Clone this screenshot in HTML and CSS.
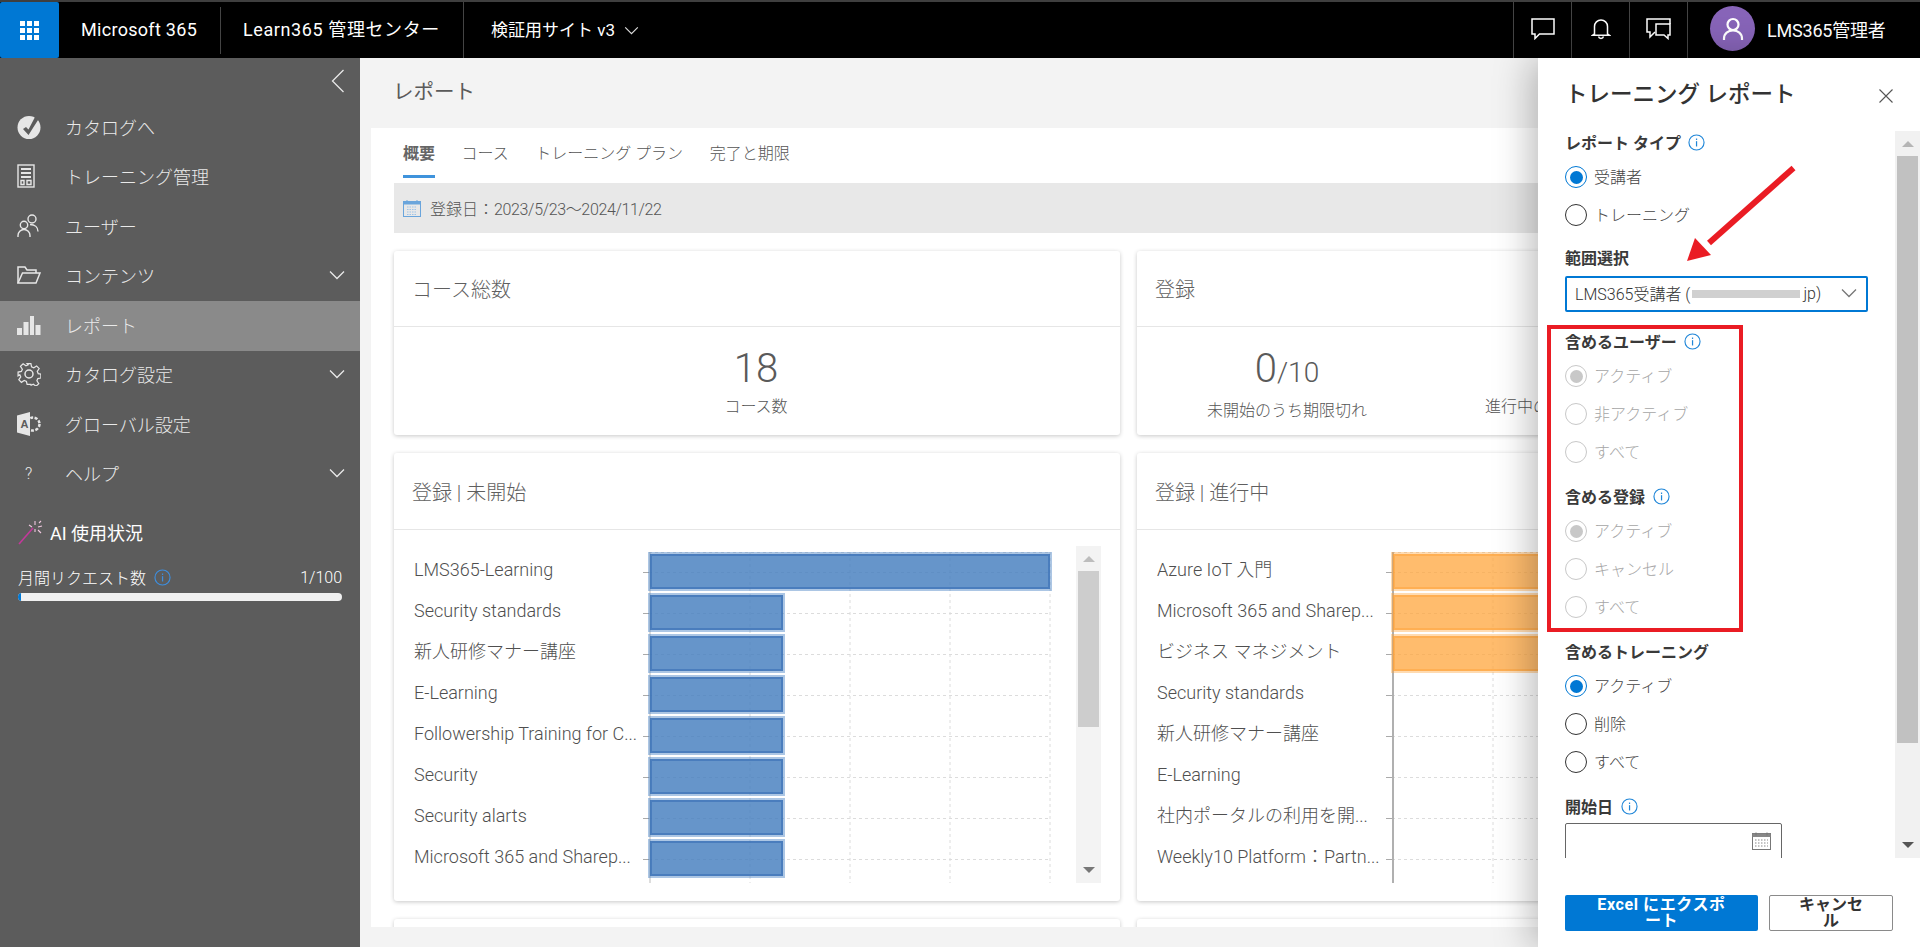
FILE: index.html
```html
<!DOCTYPE html>
<html lang="ja">
<head>
<meta charset="utf-8">
<title>レポート</title>
<link rel="stylesheet" href="styles.css">
</head>
<body>
<svg class="defs" width="0" height="0">
  <symbol id="info" viewBox="0 0 18 18"><circle cx="9" cy="9" r="8" fill="none" stroke="currentColor" stroke-width="1.2"/><rect x="8.4" y="7.6" width="1.3" height="5.6" fill="currentColor"/><rect x="8.4" y="4.8" width="1.3" height="1.5" fill="currentColor"/></symbol>
  <symbol id="chev" viewBox="0 0 16 10"><path d="M1 1.5l7 7 7-7" fill="none" stroke="currentColor" stroke-width="1.3"/></symbol>
</svg>

<header class="topbar">
  <div class="waffle">
    <svg width="19" height="19" viewBox="0 0 19 19" fill="#fff"><rect width="5" height="5"/><rect x="7" width="5" height="5"/><rect x="14" width="5" height="5"/><rect y="7" width="5" height="5"/><rect x="7" y="7" width="5" height="5"/><rect x="14" y="7" width="5" height="5"/><rect y="14" width="5" height="5"/><rect x="7" y="14" width="5" height="5"/><rect x="14" y="14" width="5" height="5"/></svg>
  </div>
  <div class="brand">Microsoft 365</div>
  <div class="app-name">Learn365 管理センター</div>
  <div class="site">検証用サイト v3<svg class="site-chev" width="15" height="9"><use href="#chev"/></svg></div>
  <div class="top-right">
    <div class="top-icon"><svg width="24" height="22" viewBox="0 0 24 22" fill="none" stroke="#fff" stroke-width="1.5"><path d="M1 1h22v15H8.500L4 20.500V16H1z"/></svg></div>
    <div class="top-icon"><svg width="20" height="22" viewBox="0 0 20 22" fill="none" stroke="#fff" stroke-width="1.5"><path d="M3.500 16V8.500a6.500 6.500 0 0 1 13 0V16l2 1.300H1.500z"/><path d="M7.500 18.500a2.600 2.600 0 0 0 5 0"/></svg></div>
    <div class="top-icon"><svg width="25" height="22" viewBox="0 0 25 22" fill="none" stroke="#fff" stroke-width="1.500"><path d="M24 6V1H1v13h3v5l5-5"/><path d="M10 6h14v11h-2v3.500L18 17h-8z"/></svg></div>
    <div class="user">
      <div class="avatar"><svg width="22" height="24" viewBox="0 0 22 24" fill="none" stroke="#fff" stroke-width="2.200"><circle cx="11" cy="7.500" r="5.500"/><path d="M2 23v-1.500C2 16.500 6 13.500 11 13.500s9 3 9 8V23"/></svg></div>
      <span class="user-name">LMS365管理者</span>
    </div>
  </div>
</header>

<div class="shell">
  <nav class="sidebar">
    <div class="collapse"><svg width="14" height="24" viewBox="0 0 14 24" fill="none" stroke="#e8e8e8" stroke-width="1.300"><path d="M12.500 1L1.500 12l11 11"/></svg></div>
    <ul class="menu">
      <li class="menu-item"><span class="menu-icon"><svg width="24" height="24" viewBox="0 0 24 24"><circle cx="12" cy="12.500" r="11.500" fill="#e6e6e6"/><path d="M6 14l3-2 2.500 2.500L18 2l4 1.500L11.500 20z" fill="#5c5c5c"/></svg></span>カタログへ</li>
      <li class="menu-item"><span class="menu-icon"><svg width="18" height="24" viewBox="0 0 18 24" fill="none" stroke="#e6e6e6" stroke-width="1.400"><rect x="1" y="1" width="16" height="22"/><path d="M4 5h10M4 9h10M4 13h10" stroke-width="2"/><path d="M4 16.500h3v4H4zM10 16.500h4v4h-4z"/></svg></span>トレーニング管理</li>
      <li class="menu-item"><span class="menu-icon"><svg width="22" height="24" viewBox="0 0 22 24" fill="none" stroke="#e6e6e6" stroke-width="1.400"><circle cx="15" cy="5" r="4"/><circle cx="7" cy="11" r="3.700"/><path d="M1 23v-1.500a6 6 0 0 1 12 0V23M13 10.500c5 0 8 3 8 7"/></svg></span>ユーザー</li>
      <li class="menu-item"><span class="menu-icon"><svg width="24" height="18" viewBox="0 0 24 18" fill="none" stroke="#e6e6e6" stroke-width="1.500"><path d="M1 17V1h7l2 3h9v3"/><path d="M1 17L5.500 7H23l-4 10z"/></svg></span>コンテンツ<svg class="menu-chev" width="16" height="10"><use href="#chev"/></svg></li>
      <li class="menu-item is-active"><span class="menu-icon"><svg width="24" height="20" viewBox="0 0 24 20" fill="#e6e6e6"><rect y="13" width="5" height="7"/><rect x="6.500" y="7" width="5" height="13"/><rect x="13" y="1" width="4" height="19"/><rect x="18.500" y="10" width="5" height="10"/></svg></span>レポート</li>
      <li class="menu-item"><span class="menu-icon"><svg width="24" height="24" viewBox="0 0 24 24" fill="none" stroke="#e6e6e6" stroke-width="1.500"><circle cx="12" cy="12" r="4"/><path d="M10 1h4l.7 3.500 2.300 1 3-2 2.700 2.800-2 3 1 2.300 2.800.6v4l-3.200.6-1 2.300 2 3-2.800 2.700-3-2-2.300 1L14 23h-4l-.7-3.200-2.300-1-3 2-2.700-2.800 2-3-1-2.300L.5 14v-4L4 9.300l1-2.300-2-3 2.800-2.700 3 2 2.300-1z" stroke-width="1.300" transform="translate(.6 .6) scale(.95)"/></svg></span>カタログ設定<svg class="menu-chev" width="16" height="10"><use href="#chev"/></svg></li>
      <li class="menu-item"><span class="menu-icon"><svg width="24" height="24" viewBox="0 0 24 24"><circle cx="16" cy="12" r="6.500" fill="none" stroke="#e6e6e6" stroke-width="2.500" stroke-dasharray="3 1.500"/><path d="M0 3.500L13 0v24L0 20.500z" fill="#e6e6e6"/><text class="global-a" x="3.500" y="16">A</text></svg></span>グローバル設定</li>
      <li class="menu-item"><span class="menu-icon menu-q">?</span>ヘルプ<svg class="menu-chev" width="16" height="10"><use href="#chev"/></svg></li>
    </ul>
    <div class="ai-title"><svg width="25" height="25" viewBox="0 0 25 25" fill="none"><path d="M1 24L15 8" stroke="#c2399a" stroke-width="1.600"/><path d="M17 1v4M17 9v3M11 5l3 2M20 7l4-1M20 10l3 3M21 3l2-2" stroke="#f0c8e0" stroke-width="1.100"/></svg><span>AI 使用状況</span></div>
    <div class="quota">
      <div class="quota-row"><span>月間リクエスト数</span><svg class="quota-info" width="17" height="17"><use href="#info"/></svg><span class="quota-num">1/100</span></div>
      <div class="progress"><div class="progress-fill"></div></div>
    </div>
  </nav>

  <main class="main">
    <h1 class="page-title">レポート</h1>
    <section class="panel">
      <div class="tabs">
        <span class="tab is-current">概要</span>
        <span class="tab">コース</span>
        <span class="tab">トレーニング プラン</span>
        <span class="tab">完了と期限</span>
      </div>
      <div class="filter">
        <svg width="18" height="18" viewBox="0 0 18 18" fill="none"><rect x=".5" y="2.500" width="17" height="15" stroke="#6aa5dc"/><rect x=".5" y="2.500" width="17" height="3" fill="#6aa5dc"/><path d="M4 1v3M14 1v3" stroke="#6aa5dc"/><path d="M4 8h10M4 10.500h10M4 13h10M4 15.500h10" stroke="#9dc3e8" stroke-dasharray="1.500 1"/></svg>
        <span>登録日：<span class="filter-date">2023/5/23～2024/11/22</span></span>
      </div>
      <div class="cards">
        <article class="card">
          <h2 class="card-head">コース総数</h2>
          <div class="stats"><div class="stat stat-wide"><div class="stat-num">18</div><div class="stat-label">コース数</div></div></div>
        </article>
        <article class="card">
          <h2 class="card-head">登録</h2>
          <div class="stats stats-split">
            <div class="stat"><div class="stat-num">0<small>/10</small></div><div class="stat-label">未開始のうち期限切れ</div></div>
            <div class="stat stat-clipped"><div class="stat-num stat-empty"></div><div class="stat-label">進行中の</div></div>
          </div>
        </article>

        <article class="card">
          <h2 class="card-head card-head-tall">登録 | 未開始</h2>
          <div class="chart">
            <ul class="labels">
              <li>LMS365-Learning</li><li>Security standards</li><li>新人研修マナー講座</li><li>E-Learning</li><li>Followership Training for C...</li><li>Security</li><li>Security alarts</li><li>Microsoft 365 and Sharep...</li>
            </ul>
            <div class="plot">
              <svg class="grid" width="403" height="331" viewBox="0 0 403 331"><path class="grid-line" d="M0 .5H401M0 20.500H401M0 61.500H401M0 102.500H401M0 143.500H401M0 184.500H401M0 225.500H401M0 266.500H401M0 307.500H401M101 0V331M201 0V331M301 0V331M401 0V331"/><path class="axis" d="M1 0V331"/></svg>
              <div class="bar bar-blue" style="width:404px"></div>
              <div class="bar bar-blue" style="width:137px"></div>
              <div class="bar bar-blue" style="width:137px"></div>
              <div class="bar bar-blue" style="width:137px"></div>
              <div class="bar bar-blue" style="width:137px"></div>
              <div class="bar bar-blue" style="width:137px"></div>
              <div class="bar bar-blue" style="width:137px"></div>
              <div class="bar bar-blue" style="width:137px"></div>
            </div>
            <div class="vscroll">
              <span class="arrow-up"></span>
              <div class="vscroll-thumb"></div>
              <span class="arrow-down"></span>
            </div>
          </div>
        </article>
        <article class="card">
          <h2 class="card-head card-head-tall">登録 | 進行中</h2>
          <div class="chart">
            <ul class="labels">
              <li>Azure IoT 入門</li><li>Microsoft 365 and Sharep...</li><li>ビジネス マネジメント</li><li>Security standards</li><li>新人研修マナー講座</li><li>E-Learning</li><li>社内ポータルの利用を開...</li><li>Weekly10 Platform：Partn...</li>
            </ul>
            <div class="plot">
              <svg class="grid" width="403" height="331" viewBox="0 0 403 331"><path class="grid-line" d="M0 .5H401M0 20.500H401M0 61.500H401M0 102.500H401M0 143.500H401M0 184.500H401M0 225.500H401M0 266.500H401M0 307.500H401M101 0V331M201 0V331M301 0V331M401 0V331"/><path class="axis axis-strong" d="M1 0V331"/></svg>
              <div class="bar bar-orange" style="width:300px"></div>
              <div class="bar bar-orange" style="width:300px"></div>
              <div class="bar bar-orange" style="width:300px"></div>
            </div>
          </div>
        </article>

        <article class="card"></article>
        <article class="card"></article>
      </div>
    </section>
  </main>
</div>

<aside class="drawer">
  <div class="drawer-head">
    <h2 class="drawer-title">トレーニング レポート</h2>
    <svg class="drawer-close" width="14" height="14" viewBox="0 0 14 14" stroke="#555" stroke-width="1.100"><path d="M.5.500l13 13M13.500.500l-13 13"/></svg>
  </div>
  <div class="drawer-body">
    <form class="form">
      <div class="field-label">レポート タイプ<svg class="info" width="17" height="17"><use href="#info"/></svg></div>
      <div class="radio is-on"><span class="radio-dot"></span><span class="radio-text">受講者</span></div>
      <div class="radio"><span class="radio-dot"></span><span class="radio-text">トレーニング</span></div>

      <div class="field-label gap-sel">範囲選択</div>
      <div class="select">LMS365受講者 (<span class="redact"></span>jp)<svg class="select-chev" width="16" height="10"><use href="#chev"/></svg></div>

      <div class="field-label gap-m">含めるユーザー<svg class="info" width="17" height="17"><use href="#info"/></svg></div>
      <div class="radio is-off is-on"><span class="radio-dot"></span><span class="radio-text">アクティブ</span></div>
      <div class="radio is-off"><span class="radio-dot"></span><span class="radio-text">非アクティブ</span></div>
      <div class="radio is-off"><span class="radio-dot"></span><span class="radio-text">すべて</span></div>

      <div class="field-label gap-s">含める登録<svg class="info" width="17" height="17"><use href="#info"/></svg></div>
      <div class="radio is-off is-on"><span class="radio-dot"></span><span class="radio-text">アクティブ</span></div>
      <div class="radio is-off"><span class="radio-dot"></span><span class="radio-text">キャンセル</span></div>
      <div class="radio is-off"><span class="radio-dot"></span><span class="radio-text">すべて</span></div>

      <div class="field-label gap-s">含めるトレーニング</div>
      <div class="radio is-on"><span class="radio-dot"></span><span class="radio-text">アクティブ</span></div>
      <div class="radio"><span class="radio-dot"></span><span class="radio-text">削除</span></div>
      <div class="radio"><span class="radio-dot"></span><span class="radio-text">すべて</span></div>

      <div class="field-label gap-s gap-date">開始日<svg class="info" width="17" height="17"><use href="#info"/></svg></div>
      <div class="date">
        <svg width="19" height="18" viewBox="0 0 19 18" fill="none"><rect x=".5" y="1.500" width="18" height="16" stroke="#777"/><rect x=".5" y="1.500" width="18" height="3.500" fill="#888"/><path d="M4 .5v3M15 .5v3" stroke="#777"/><path d="M3 8h13M3 11h13M3 14h13" stroke="#888" stroke-dasharray="1.500 1.500"/></svg>
      </div>
    </form>
    <div class="drawer-scroll">
      <span class="arrow-up arrow-dark"></span>
      <div class="drawer-thumb"></div>
      <span class="arrow-down arrow-dark"></span>
    </div>
  </div>
  <div class="drawer-foot">
    <button class="btn btn-primary" type="button">Excel にエクスポート</button>
    <button class="btn btn-plain" type="button">キャンセル</button>
  </div>
</aside>

<div class="mark-box"></div>
<svg class="mark-arrow" width="112" height="100" viewBox="0 0 112 100"><path d="M108.500 3L24 78" stroke="#ea1c24" stroke-width="6" fill="none"/><path d="M2 96L10 73 26 90z" fill="#ea1c24"/></svg>
</body>
</html>
```
FILE: styles.css
```css
* { box-sizing: border-box; }
html, body { margin: 0; padding: 0; }
body {
  position: relative;
  width: 1920px;
  height: 947px;
  overflow: hidden;
  font-family: Roboto, "Noto Sans CJK JP", sans-serif;
  font-weight: 300;
  color: #555;
  background: #f3f3f3;
}
ul { list-style: none; margin: 0; padding: 0; }
h1, h2 { margin: 0; font-weight: 300; }
.defs { position: absolute; }

/* top bar */
.topbar {
  display: flex;
  height: 58px;
  background: #000;
  border-top: 2px solid #3f3f3f;
  color: #fff;
  font-size: 18px;
  font-weight: 400;
}
.waffle {
  width: 59px;
  background: #0078d4;
  border-radius: 2px;
  display: flex;
  align-items: center;
  justify-content: center;
}
.brand { width: 162px; padding-left: 22px; line-height: 55px; position: relative; letter-spacing: .3px; }
.brand::after {
  content: "";
  position: absolute;
  right: 0;
  top: 5px;
  bottom: 4px;
  width: 1px;
  background: #444;
}
.app-name {
  width: 243px;
  padding-left: 22px;
  line-height: 55px;
  border-right: 1px solid #444;
  font-size: 18px;
  letter-spacing: .6px;
}
.site { padding-left: 27px; line-height: 55px; display: flex; align-items: center; white-space: pre; font-size: 17px; }
.site-chev { margin-left: 9px; color: #ddd; }
.top-right { margin-left: auto; display: flex; }
.top-icon {
  width: 58px;
  border-left: 1px solid #444;
  display: flex;
  align-items: center;
  justify-content: center;
  padding-bottom: 2px;
}
.user {
  width: 233px;
  border-left: 1px solid #444;
  padding-left: 22px;
  display: flex;
  align-items: center;
  padding-bottom: 3px;
}
.avatar {
  width: 45px;
  height: 45px;
  border-radius: 50%;
  background: #8764b8;
  display: flex;
  align-items: center;
  justify-content: center;
}
.user-name { margin-left: 12px; font-size: 18px; letter-spacing: -.2px; }

.shell { display: flex; height: 889px; }

/* sidebar */
.sidebar {
  width: 360px;
  background: #5c5c5c;
  color: #e9e9e9;
  font-size: 18px;
  flex: none;
}
.collapse { height: 45px; padding: 11px 0 0 331px; line-height: 0; }
.menu-item {
  display: flex;
  align-items: center;
  height: 49.5px;
  padding-left: 17px;
  padding-bottom: 2px;
  font-weight: 300;
}
.menu-item.is-active { background: #8a8a8a; }
.menu-icon { width: 48px; flex: none; display: flex; align-items: center; }
.menu-q { padding-left: 8px; font-size: 16px; }
.global-a { font: 700 11px "Liberation Sans", sans-serif; fill: #5c5c5c; }
.menu-chev { margin-left: auto; margin-right: 15px; color: #e9e9e9; }
.ai-title {
  display: flex;
  align-items: center;
  margin-top: 19px;
  padding-left: 18px;
  height: 28px;
  color: #fff;
  font-weight: 400;
}
.ai-title span { margin-left: 7px; }
.quota { padding: 19px 18px 0; font-size: 16px; color: #fff; }
.quota-row { display: flex; align-items: center; height: 24px; }
.quota-info { margin-left: 8px; color: #3d8fe0; }
.quota-num { margin-left: auto; }
.progress { margin-top: 4px; height: 8px; background: #f0f0f0; border-radius: 4px; overflow: hidden; }
.progress-fill { width: 3px; height: 8px; background: #0078d4; }

/* main */
.main { flex: 1; min-width: 0; }
.page-title {
  height: 70px;
  padding-left: 33px;
  font-size: 20.500px;
  font-weight: 400;
  line-height: 69px;
  color: #5a5a5a;
}
.panel { height: 799px; margin-left: 11px; padding-left: 23px; background: #fff; overflow: hidden; }
.tabs { display: flex; height: 55px; padding-left: 9px; gap: 26.500px; font-size: 16px; }
.tab { height: 50px; line-height: 52px; }
.tab.is-current { border-bottom: 3px solid #3f93dc; font-weight: 700; color: #666; }
.filter {
  display: flex;
  align-items: center;
  gap: 9px;
  height: 50px;
  width: 1200px;
  padding-left: 9px;
  background: #e8e8e8;
  font-size: 16px;
}
.filter-date { letter-spacing: -.35px; }
.cards {
  display: grid;
  grid-template-columns: 726px 726px;
  grid-template-rows: 184px 448px 100px;
  gap: 18px 17px;
  margin-top: 18px;
}
.card { background: #fff; border-radius: 3px; box-shadow: 0 1px 4px rgba(0,0,0,.22); }
.card-head {
  height: 76px;
  padding-left: 18px;
  border-bottom: 1px solid #e6e6e6;
  font-size: 20px;
  line-height: 78px;
  color: #5f5f5f;
}
.card-head-tall { height: 77px; line-height: 80px; }
.stats { display: flex; justify-content: center; padding-top: 18px; }
.stats-split { justify-content: flex-start; padding-left: 11px; }
.stats-split .stat { width: 278px; }
.stats-split .stat-clipped { text-align: left; padding-left: 59px; }
.stat { text-align: center; }
.stat-wide { width: 100%; padding-right: 2px; }
.stat-num { font-size: 40px; line-height: 48px; color: #5a5a5a; font-weight: 300; }
.stat-num small { font-size: 28px; }
.stat-empty { height: 48px; }
.stat-label { margin-top: 3px; font-size: 16px; line-height: 22px; }

/* chart */
.chart { display: flex; height: 337px; margin-top: 16px; padding-left: 20px; }
.labels { width: 235px; flex: none; padding-top: 6px; font-size: 18px; }
.labels li {
  position: relative;
  height: 41px;
  line-height: 36px;
  white-space: nowrap;
  color: #4f4f4f;
}
.labels li::after {
  content: "";
  position: absolute;
  left: 229px;
  top: 20px;
  width: 6px;
  height: 1px;
  background: #aaa;
}
.plot { position: relative; width: 403px; flex: none; padding-top: 6px; }
.grid { position: absolute; left: 0; top: 6px; }
.grid-line { stroke: #dcdcdc; fill: none; stroke-dasharray: 3 3; }
.axis { stroke: #bbb; fill: none; }
.axis-strong { stroke: #b0b0b0; stroke-width: 2; }
.bar { position: relative; height: 39px; margin-bottom: 2px; margin-left: -1px; border: 2px solid; background-clip: padding-box; }
.bar-blue {
  background-color: rgba(68,126,190,.82);
  border-color: rgba(70,128,195,.45);
  box-shadow: inset 0 0 0 2px rgba(55,110,180,.6);
}
.bar-orange {
  background-color: rgba(255,165,60,.75);
  border-color: rgba(255,165,60,.4);
  box-shadow: inset 0 0 0 2px rgba(255,160,50,.45);
}
.vscroll {
  width: 25px;
  height: 337px;
  margin-left: 24px;
  background: #f3f3f3;
  position: relative;
  padding: 25px 2px 0;
}
.vscroll-thumb { height: 156px; background: #cdcdcd; }
.arrow-up, .arrow-down {
  position: absolute;
  left: 50%;
  margin-left: -6px;
  width: 0;
  height: 0;
  border-left: 6px solid transparent;
  border-right: 6px solid transparent;
}
.arrow-up { top: 10px; border-bottom: 6px solid #bdbdbd; }
.arrow-down { bottom: 10px; border-top: 6px solid #777; }

/* drawer */
.drawer {
  position: absolute;
  top: 58px;
  right: 0;
  bottom: 0;
  width: 382px;
  background: #fff;
  box-shadow: -6px 0 36px rgba(0,0,0,.28);
  color: #333;
  display: flex;
  flex-direction: column;
  font-weight: 400;
}
.drawer-head { height: 73px; padding: 0 27px 5px 27px; display: flex; align-items: center; justify-content: space-between; flex: none; }
.drawer-title { font-size: 22.500px; font-weight: 500; color: #333; white-space: nowrap; }
.drawer-close { margin-top: 8px; }
.drawer-body { position: relative; height: 727px; flex: none; overflow: hidden; }
.form { padding-left: 27px; }
.field-label {
  display: flex;
  align-items: center;
  height: 24px;
  margin-bottom: 3px;
  padding-bottom: 2px;
  font-size: 16px;
  font-weight: 700;
  color: #3a3a3a;
  white-space: pre;
}
.gap-s { margin-top: 14px; }
.gap-date { margin-bottom: 4px; }
.gap-sel { margin-top: 12px; margin-bottom: 6px; }
.gap-m { margin-top: 18px; }
.info { margin-left: 7.500px; color: #1f86d8; }
.radio { display: flex; align-items: center; height: 38px; font-size: 16px; font-weight: 300; color: #444; }
.radio-text { padding-bottom: 3px; }
.radio-dot {
  position: relative;
  width: 22px;
  height: 22px;
  margin-right: 7px;
  border: 1.500px solid #333;
  border-radius: 50%;
  flex: none;
}
.radio.is-on .radio-dot { border-color: #0078d4; }
.radio.is-on .radio-dot::after {
  content: "";
  position: absolute;
  inset: 3.500px;
  background: #0078d4;
  border-radius: 50%;
}
.radio.is-off { color: #a6a6a6; }
.radio.is-off .radio-dot { border-color: #c8c8c8; }
.radio.is-off.is-on .radio-dot::after { background: #c8c8c8; }
.select {
  display: flex;
  align-items: center;
  width: 303px;
  height: 36px;
  padding: 0 8px 2px;
  border: 2px solid #0078d4;
  border-radius: 2px;
  font-size: 16px;
  font-weight: 300;
  color: #333;
  white-space: pre;
}
.redact { width: 108px; height: 8px; margin: 2px 3px 0 2px; background: #d0d0d0; }
.select-chev { margin-left: auto; margin-right: 1px; color: #777; }
.date {
  display: flex;
  align-items: center;
  justify-content: flex-end;
  width: 217px;
  height: 60px;
  padding: 0 10px 24px 0;
  border: 1px solid #666;
  border-radius: 2px;
}
.drawer-scroll {
  position: absolute;
  top: 0;
  right: 0;
  bottom: 0;
  width: 25px;
  background: #f1f1f1;
  padding: 25px 2px 0;
}
.drawer-thumb { height: 587px; background: #c1c1c1; }
.arrow-dark.arrow-up { border-bottom-color: #b5b5b5; }
.arrow-dark.arrow-down { border-top-color: #555; }
.drawer-foot { flex: none; display: flex; gap: 11px; padding: 37px 0 0 27px; }
.btn {
  height: 36px;
  padding-top: 0;
  padding-bottom: 0;
  font-family: inherit;
  font-size: 16px;
  font-weight: 700;
  line-height: 16px;
  border-radius: 2px;
  cursor: pointer;
}
.btn-primary { width: 193px; padding-left: 25px; padding-right: 25px; background: #0078d4; border: 0; color: #fff; letter-spacing: .6px; }
.btn-plain { width: 124px; padding-left: 26px; padding-right: 26px; background: #fff; border: 1px solid #8a8a8a; color: #333; }

/* annotations over the page */
.mark-box {
  position: absolute;
  left: 1547px;
  top: 325px;
  width: 196px;
  height: 307px;
  border: 4.500px solid #ea1c24;
}
.mark-arrow { position: absolute; left: 1685px; top: 165px; }
```
